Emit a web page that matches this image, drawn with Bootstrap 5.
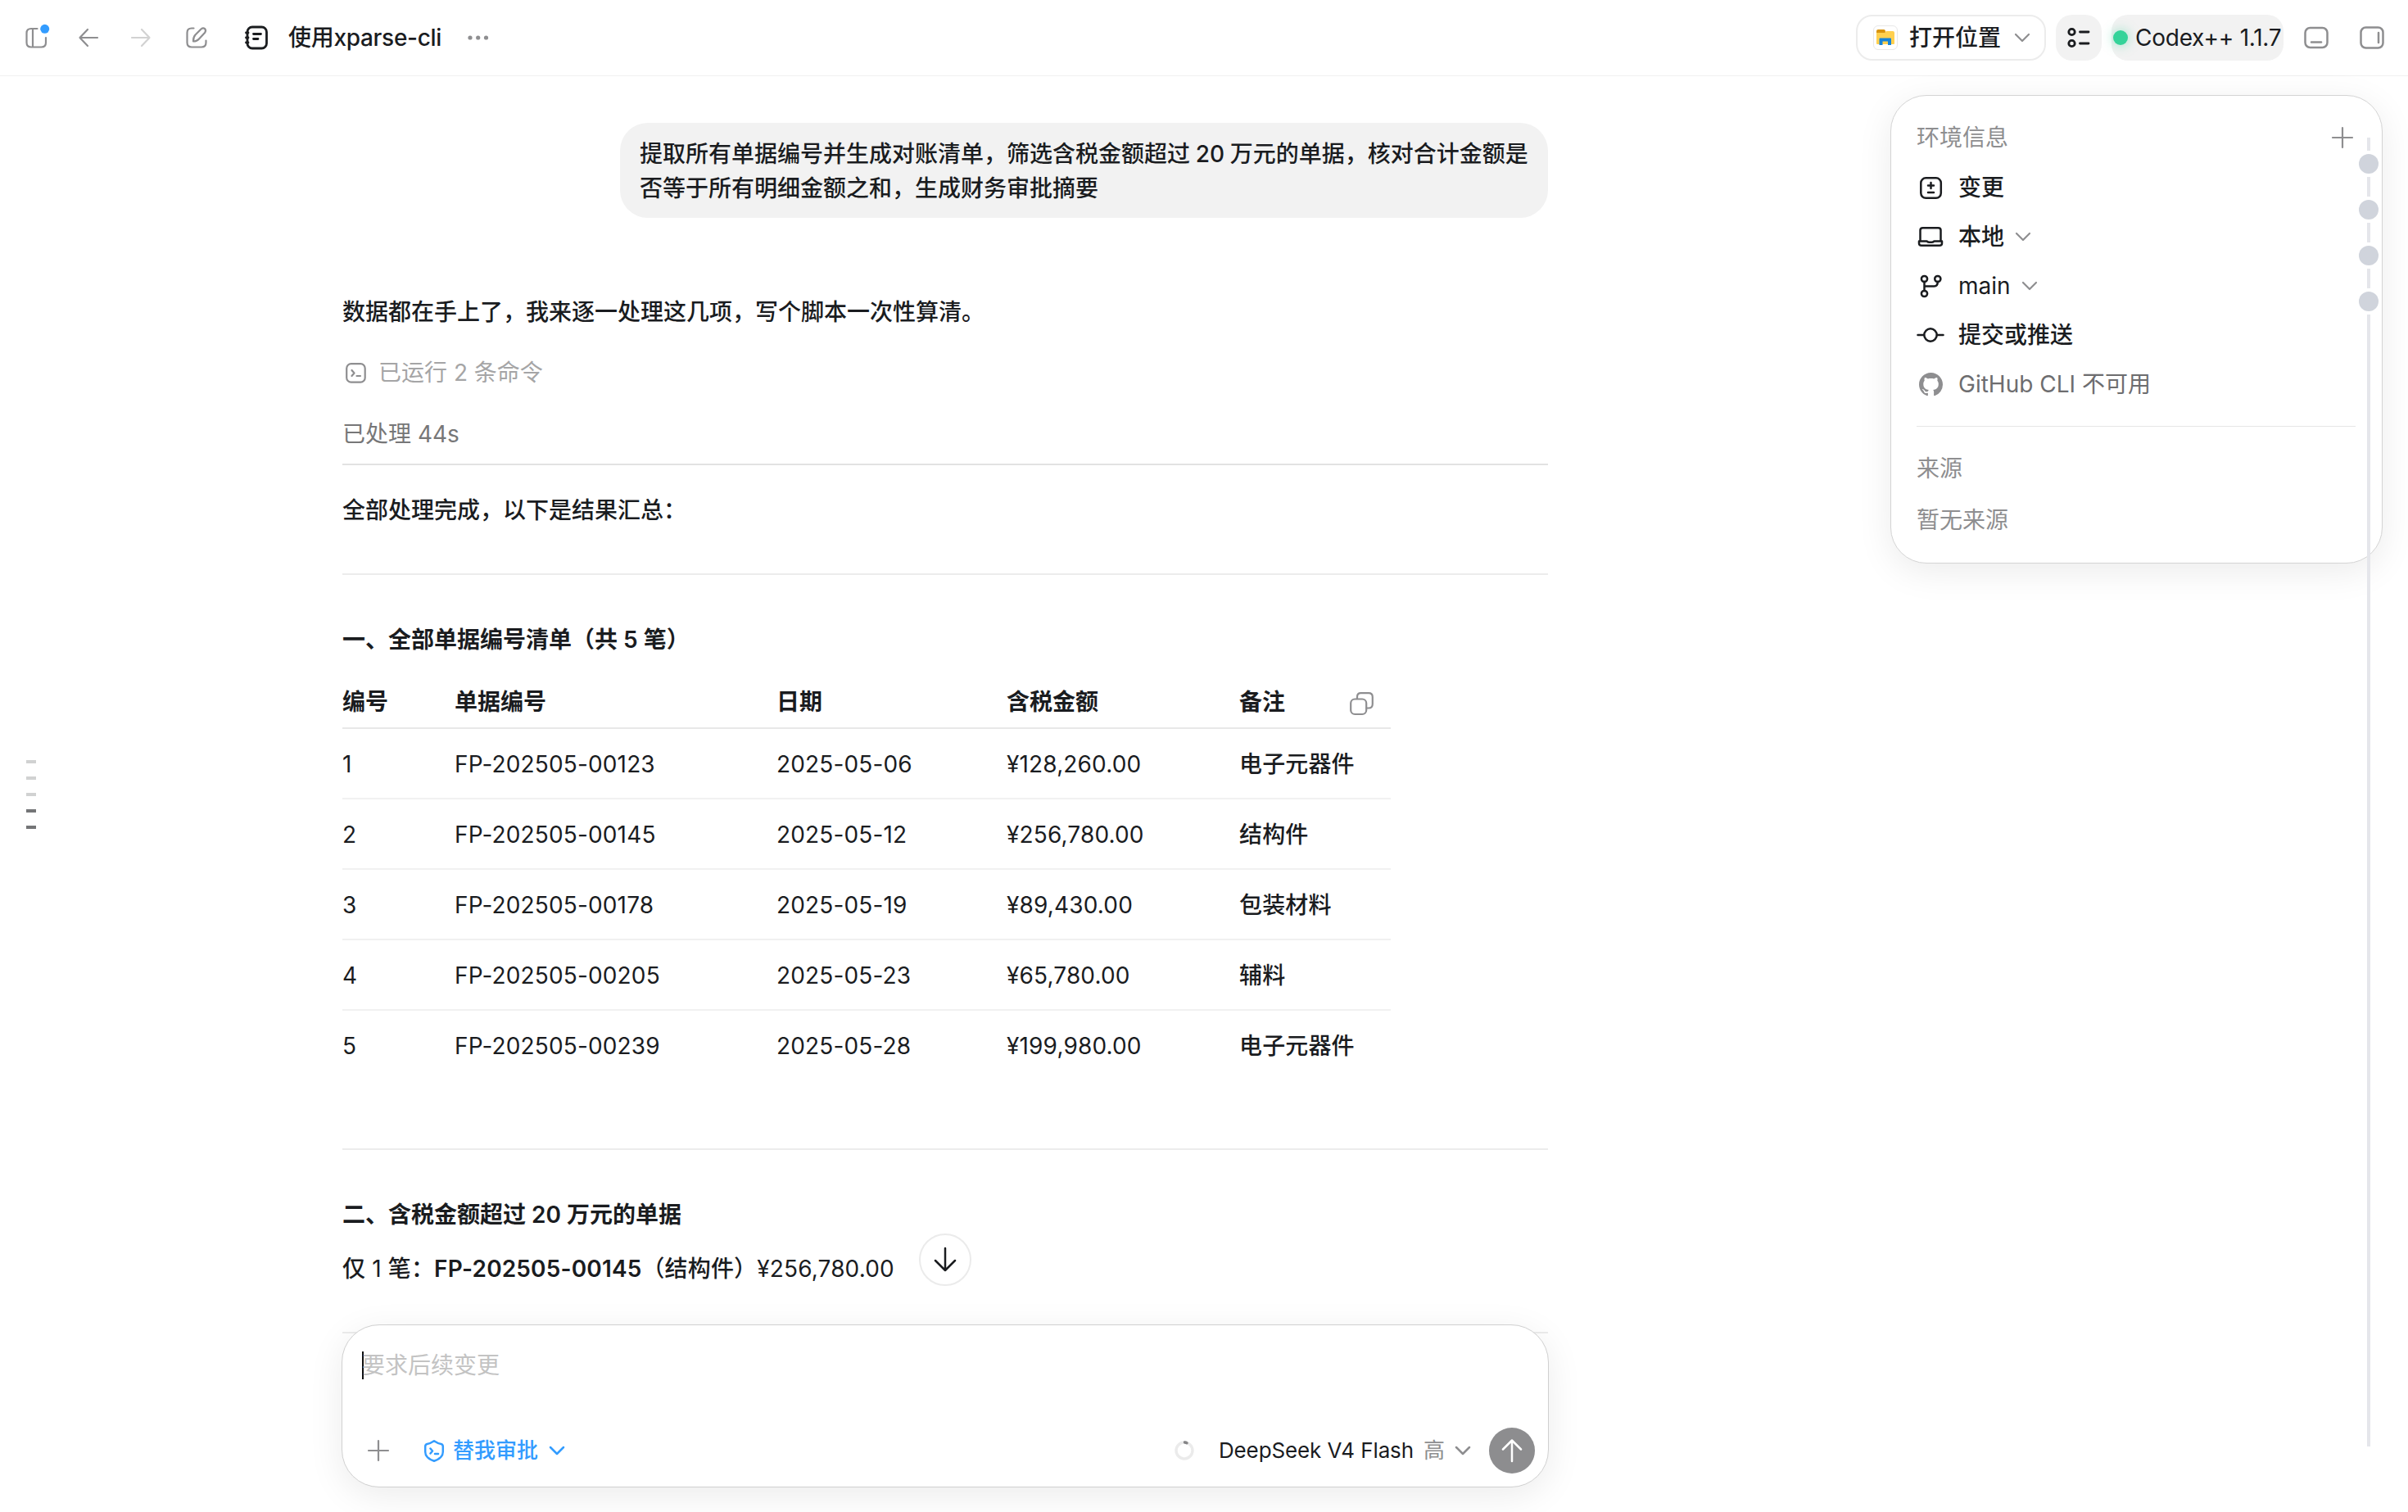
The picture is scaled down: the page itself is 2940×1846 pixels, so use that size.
<!DOCTYPE html>
<html lang="zh-CN">
<head>
<meta charset="utf-8">
<title>使用xparse-cli</title>
<link href="https://cdn.jsdelivr.net/npm/bootstrap@5.3.0/dist/css/bootstrap.min.css" rel="stylesheet">
<style>
:root{--ink:#1a1c1f;--mute:#8e8e90;--rule:#ececec}
html,body{height:100%;overflow:hidden}
body{font-family:Inter,"Noto Sans CJK SC",sans-serif;font-size:28px;line-height:42px;color:var(--ink);background:#fff}
svg{display:block;flex:none;fill:none;stroke:currentColor;stroke-width:2.2;stroke-linecap:round;stroke-linejoin:round;overflow:visible}
svg.solid{stroke:none}
svg.firm{stroke-width:2.5}
svg.bold-line{stroke-width:2.8}
.cn{font-weight:500}
.mute{color:var(--mute)}
.topbar{height:93px;border-bottom:1px solid #f0f0f0;padding:0 29px 0 30px}
.pill{height:56px;border-radius:20px;background:#f2f2f2}
.pill-line{background:#fff;border:2px solid var(--rule);width:232px;padding-left:19px}
.app-tile{width:30px;height:30px;border:1px solid #e8e8e8;border-radius:6px}
.status-dot{width:18px;height:18px;border-radius:50%;background:#34d399;box-shadow:0 0 14px rgba(52,211,153,.5)}
.codex{letter-spacing:-.25px}
.doc-title{letter-spacing:-.3px}
.model{letter-spacing:-.12px}
.work{height:1753px}
.thread{width:1472px;padding-top:57px}
.bubble{width:1133px;padding:17px 20px 15px 24px;border-radius:34px;background:#f2f2f2;word-spacing:-.7px}
.rule{height:2px;background:var(--rule)}
.rule-strong{background:#e2e2e2}
.bill-table{width:1280px;table-layout:fixed;border-collapse:separate;border-spacing:0;margin-top:21px}
.bill-table th{font-weight:600;height:67px;padding:13px 0 10px;border-bottom:2px solid #e8e8e8}
.bill-table td{height:86px;padding:1px 0 0;border-bottom:2px solid #f1f1f1}
.bill-table tr:last-child td{border-bottom:0;height:84px}
.latin{letter-spacing:.15px}
.copy-btn{right:21px;top:22px}
.side{width:632px;padding:23px 32px 0 0}
.env{width:601px;height:572px;border:1px solid #d4d4d4;border-radius:44px;background:#fff;padding:30px 32px 0 31px;box-shadow:0 10px 44px rgba(0,0,0,.08)}
.env-row{height:60px;gap:17px}
.env-ic{width:34px;display:flex;justify-content:center}
.rail{left:2880px;top:168px;width:24px}
.seg{width:4px;background:#e5e6eb}
.knot{width:24px;height:24px;border-radius:50%;background:#d0d4dc;margin:4px 0}
.ticks{left:32px;top:928px;gap:16px}
.tick{width:12px;height:4px;background:#d1d2d2}
.tick-on{background:#747577}
.to-end{left:1122px;top:1506px;width:64px;height:64px;border:2px solid #ebebeb;border-radius:50%;background:#fff}
.composer{left:417px;top:1617px;width:1474px;height:199px;border:1px solid #d0d0d0;border-radius:46px;background:#fff;box-shadow:0 10px 44px rgba(0,0,0,.08);padding:28px 16px 16px 24px}
.caret{width:2px;height:34px;background:#111}
.hint{color:#c3c3c3;margin-left:-2px}
.tools{font-size:26px;height:56px}
.blue{color:#339cff}
.send{width:56px;height:56px;border-radius:50%;background:#8d8d8f;color:#fff}
</style>
<script src="https://cdn.jsdelivr.net/npm/bootstrap@5.3.0/dist/js/bootstrap.bundle.min.js"></script>
</head>
<body>
<header class="topbar d-flex align-items-center">
  <svg class="mute" width="28" height="28" viewBox="0 0 28 28"><path d="M15.500 3H8Q2.500 3 2.500 8.500V20Q2.500 25.500 8 25.500H20.500Q26 25.500 26 20V14M10 3V25.500"/><circle cx="24.700" cy="3.300" r="5.500" fill="#339cff" stroke="none"/></svg>
  <svg class="mute" style="margin-left:38px" width="24" height="24" viewBox="0 0 24 24"><path d="M11 2 1.500 12 11 22M1.500 12H23"/></svg>
  <svg style="margin-left:40px;color:#d2d2d2" width="24" height="24" viewBox="0 0 24 24"><path d="M13 2 22.500 12 13 22M22.500 12H1"/></svg>
  <svg class="mute" style="margin-left:43px" width="26" height="26" viewBox="0 0 26 26"><path d="M9.500 1.500H7Q1.500 1.500 1.500 7V19Q1.500 24.500 7 24.500H19Q24.500 24.500 24.500 19V16.500M9 17.500Q8.800 12.500 11.500 9.500L18.500 2.500Q21 .500 23.200 2.200Q25 4.500 23 7L16.500 14Q13.500 17.500 9 17.500Z"/></svg>
  <svg class="bold-line" style="margin-left:46px" width="28" height="28" viewBox="0 0 28 28"><rect x="3" y="1" width="23.500" height="26" rx="6"/><path d="M1.500 8H4M1.500 14H4M1.500 20H4M10.500 9.500H19.500M10.500 15.500H16"/></svg>
  <span class="cn doc-title" style="margin-left:25px">使用xparse-cli</span>
  <svg class="mute" style="margin-left:32px" width="26" height="8" viewBox="0 0 26 8"><g fill="currentColor" stroke="none"><circle cx="3" cy="4" r="2.600"/><circle cx="12.700" cy="4" r="2.600"/><circle cx="22.500" cy="4" r="2.600"/></g></svg>
  <div class="pill pill-line d-flex align-items-center ms-auto">
    <span class="app-tile d-flex align-items-center justify-content-center"><svg class="solid" width="22" height="20" viewBox="0 0 22 20"><path d="M0 2Q0 0 2 0H9Q11 0 11 3V5H0Z" fill="#d9940f"/><path d="M0 4H10L12 2H20Q22 2 22 4V17Q22 18 21 18H1Q0 18 0 17Z" fill="#ffd04f"/><path d="M3.500 19V11.500Q3.500 10.500 4.500 10.500H17Q18 10.500 18 11.500V19H14V14.500H7.500V19Z" fill="#1683d8"/></svg></span>
    <span class="cn" style="margin-left:14px">打开位置</span>
    <svg class="mute" style="margin-left:17px" width="18" height="10" viewBox="0 0 18 10"><path d="M1 1 9 9 17 1"/></svg>
  </div>
  <div class="pill d-flex align-items-center justify-content-center" style="width:56px;margin-left:12px"><svg class="bold-line" width="28" height="26" viewBox="0 0 28 26"><circle cx="5.500" cy="6" r="3.700"/><circle cx="5.500" cy="20" r="3.700"/><path d="M15.500 6H26M15.500 20H26"/></svg></div>
  <div class="pill d-flex align-items-center text-nowrap" style="width:210px;margin-left:12px;padding-left:2px"><span class="status-dot"></span><span class="codex" style="margin-left:9px">Codex++ 1.1.7</span></div>
  <svg class="mute firm" style="margin-left:25px" width="30" height="28" viewBox="0 0 30 28"><rect x="1.500" y="2" width="27" height="24" rx="6"/><path d="M9 19.500H21"/></svg>
  <svg class="mute firm" style="margin-left:38px" width="30" height="28" viewBox="0 0 30 28"><rect x="1.500" y="1.500" width="27" height="25" rx="6"/><path d="M23 8V20"/></svg>
</header>

<div class="work d-flex">
  <main class="flex-fill d-flex justify-content-center">
    <div class="thread">
      <div class="bubble cn ms-auto">提取所有单据编号并生成对账清单，筛选含税金额超过 20 万元的单据，核对合计金额是否等于所有明细金额之和，生成财务审批摘要</div>
      <div class="cn" style="margin-top:94px">数据都在手上了，我来逐一处理这几项，写个脚本一次性算清。</div>
      <div class="d-flex align-items-center" style="margin-top:32px;color:#a5a5a6"><svg class="mute" style="margin:0 15px 0 4px" width="25" height="25" viewBox="0 0 25 25"><rect x="1.200" y="1.200" width="22.500" height="22.500" rx="5.500"/><path d="M7.500 9 10.500 12.500 7.500 16M13.500 16H18"/></svg>已运行 2 条命令</div>
      <div style="margin-top:33px;padding-bottom:15px;color:#777778">已处理 44s</div>
      <div class="rule rule-strong"></div>
      <div class="cn" style="margin-top:34px">全部处理完成，以下是结果汇总：</div>
      <div class="rule" style="margin-top:56px"></div>
      <div class="fw-semibold" style="margin-top:58px">一、全部单据编号清单（共 5 笔）</div>
      <div class="position-relative" style="width:1280px">
        <table class="bill-table">
          <colgroup><col style="width:137px"><col style="width:393px"><col style="width:281px"><col style="width:284px"><col></colgroup>
          <thead><tr><th>编号</th><th>单据编号</th><th>日期</th><th>含税金额</th><th>备注</th></tr></thead>
          <tbody class="latin">
            <tr><td>1</td><td>FP-202505-00123</td><td>2025-05-06</td><td>¥128,260.00</td><td class="cn">电子元器件</td></tr>
            <tr><td>2</td><td>FP-202505-00145</td><td>2025-05-12</td><td>¥256,780.00</td><td class="cn">结构件</td></tr>
            <tr><td>3</td><td>FP-202505-00178</td><td>2025-05-19</td><td>¥89,430.00</td><td class="cn">包装材料</td></tr>
            <tr><td>4</td><td>FP-202505-00205</td><td>2025-05-23</td><td>¥65,780.00</td><td class="cn">辅料</td></tr>
            <tr><td>5</td><td>FP-202505-00239</td><td>2025-05-28</td><td>¥199,980.00</td><td class="cn">电子元器件</td></tr>
          </tbody>
        </table>
        <svg class="copy-btn mute position-absolute" width="29" height="28" viewBox="0 0 29 28"><rect x="1.200" y="8.500" width="19" height="18.500" rx="5"/><path d="M9 8V6Q9 1.200 13.500 1.200H23Q27.800 1.200 27.800 6V14.500Q27.800 19.500 23 19.500H20.500"/></svg>
      </div>
      <div class="rule" style="margin-top:84px"></div>
      <div class="fw-semibold" style="margin-top:58px">二、含税金额超过 20 万元的单据</div>
      <div class="latin" style="margin-top:24px"><span class="cn">仅</span> 1 <span class="cn">笔：</span><span class="fw-semibold">FP-202505-00145</span><span class="cn">（结构件）</span>¥256,780.00</div>
      <div class="rule" style="margin-top:56px"></div>
    </div>
  </main>
  <aside class="side">
    <div class="env position-relative">
      <div class="d-flex align-items-center mute"><span>环境信息</span><svg class="ms-auto" style="margin-right:3px" width="26" height="26" viewBox="0 0 26 26"><path d="M13 1V25M1 13H25"/></svg></div>
      <div style="padding-top:10px">
        <div class="env-row d-flex align-items-center"><span class="env-ic"><svg class="firm" width="27" height="27" viewBox="0 0 27 27"><rect x="1.300" y="1.300" width="24.500" height="24.500" rx="6"/><path d="M13.500 7V14M10 10.500H17M10 19H17"/></svg></span><span class="cn">变更</span></div>
        <div class="env-row d-flex align-items-center"><span class="env-ic"><svg class="firm" width="30" height="24" viewBox="0 0 30 24"><path d="M2.500 17V4Q2.500 1.200 5.500 1.200H24.500Q27.500 1.200 27.500 4V17M1 17.500H10.500Q12 18.800 13.500 18.800H16.500Q18 18.800 19.500 17.500H29V20Q29 22.800 26 22.800H4Q1 22.800 1 20Z"/></svg></span><span class="cn">本地</span><svg class="mute" style="margin-left:-3px" width="18" height="10" viewBox="0 0 18 10"><path d="M1 1 9 9 17 1"/></svg></div>
        <div class="env-row d-flex align-items-center"><span class="env-ic"><svg class="firm" width="27" height="27" viewBox="0 0 27 27"><circle cx="5.500" cy="4.500" r="3.600"/><circle cx="21.800" cy="4.500" r="3.600"/><circle cx="5.500" cy="22.500" r="3.600"/><path d="M5.500 8V19M21.800 8Q21.800 13.500 17.500 13.500H5.500"/></svg></span><span>main</span><svg class="mute" style="margin-left:-3px" width="18" height="10" viewBox="0 0 18 10"><path d="M1 1 9 9 17 1"/></svg></div>
        <div class="env-row d-flex align-items-center"><span class="env-ic"><svg class="firm" width="34" height="20" viewBox="0 0 34 20"><circle cx="17" cy="10" r="7.700"/><path d="M1.500 10H9M25 10H32.500"/></svg></span><span class="cn">提交或推送</span></div>
        <div class="env-row d-flex align-items-center"><span class="env-ic mute"><svg class="solid" width="29" height="29" viewBox="0 0 16 16"><path fill="currentColor" d="M8 0C3.580 0 0 3.580 0 8c0 3.540 2.290 6.530 5.470 7.590.4.070.55-.17.55-.38 0-.19-.01-.82-.01-1.490-2.010.37-2.530-.49-2.690-.94-.09-.23-.48-.94-.82-1.130-.28-.15-.68-.52-.01-.53.63-.01 1.080.58 1.230.82.72 1.210 1.870.87 2.330.66.07-.52.28-.87.51-1.070-1.780-.2-3.640-.89-3.640-3.950 0-.87.31-1.590.82-2.150-.08-.2-.36-1.020.08-2.120 0 0 .67-.21 2.200.82.64-.18 1.320-.27 2-.27s1.360.09 2 .27c1.530-1.040 2.200-.82 2.200-.82.44 1.100.16 1.920.08 2.120.51.56.82 1.270.82 2.150 0 3.070-1.870 3.750-3.650 3.950.29.25.54.73.54 1.480 0 1.070-.01 1.930-.01 2.200 0 .21.15.46.55.38A8.010 8.010 0 0 0 16 8c0-4.420-3.580-8-8-8Z"/></svg></span><span style="color:#6d6d6f">GitHub CLI 不可用</span></div>
      </div>
      <div class="rule" style="margin-top:21px;height:1px;background:#e6e6e6"></div>
      <div class="mute" style="margin-top:30px">来源</div>
      <div class="mute" style="margin-top:21px">暂无来源</div>
    </div>
  </aside>
</div>

<div class="rail position-absolute d-flex flex-column align-items-center">
  <span class="seg" style="height:16px"></span><span class="knot"></span>
  <span class="seg" style="height:24px"></span><span class="knot"></span>
  <span class="seg" style="height:24px"></span><span class="knot"></span>
  <span class="seg" style="height:24px"></span><span class="knot"></span>
  <span class="seg" style="height:1382px"></span>
</div>
<div class="ticks position-absolute d-flex flex-column"><span class="tick"></span><span class="tick"></span><span class="tick"></span><span class="tick tick-on"></span><span class="tick tick-on"></span></div>

<button class="to-end position-absolute p-0 d-flex align-items-center justify-content-center" type="button"><svg class="firm" width="28" height="30" viewBox="0 0 28 30"><path stroke="#1a1c1f" d="M14 1V28M2 16 14 28 26 16"/></svg></button>

<div class="composer position-absolute d-flex flex-column">
  <div class="d-flex align-items-center"><span class="caret"></span><span class="hint">要求后续变更</span></div>
  <div class="tools d-flex align-items-center mt-auto">
    <svg class="mute" style="margin-left:7px" width="26" height="26" viewBox="0 0 26 26"><path d="M13 1V25M1 13H25"/></svg>
    <span class="blue cn d-flex align-items-center" style="margin-left:43px">
      <svg class="firm" width="24" height="27" viewBox="0 0 24 27"><path d="M12 1.200Q17 4.500 20.500 5Q22.800 5.500 22.800 8V14.500Q22.800 22 12 25.800Q1.200 22 1.200 14.500V8Q1.200 5.500 3.500 5Q7 4.500 12 1.200ZM7.500 10.500 10 13.500 7.500 16.500M13 17H17"/></svg>
      <span style="margin-left:11px">替我审批</span>
      <svg class="firm" style="margin-left:14px" width="18" height="10" viewBox="0 0 18 10"><path d="M1 1 9 9 17 1"/></svg>
    </span>
    <svg class="ms-auto" width="24" height="24" viewBox="0 0 24 24"><g stroke-width="3.400"><circle cx="12" cy="12" r="10" stroke="#ebebeb"/><path d="M12.500 2Q14 2.200 15 2.700" stroke="#858587"/></g></svg>
    <span class="model text-nowrap" style="margin-left:30px">DeepSeek V4 Flash</span>
    <span class="mute" style="margin-left:12px">高</span>
    <svg class="mute firm" style="margin-left:13px" width="18" height="10" viewBox="0 0 18 10"><path d="M1 1 9 9 17 1"/></svg>
    <span class="send d-flex align-items-center justify-content-center" style="margin-left:23px"><svg class="firm" width="24" height="28" viewBox="0 0 24 28"><path d="M12 27V1.500M1 12.500 12 1.500 23 12.500"/></svg></span>
  </div>
</div>
</body>
</html>
